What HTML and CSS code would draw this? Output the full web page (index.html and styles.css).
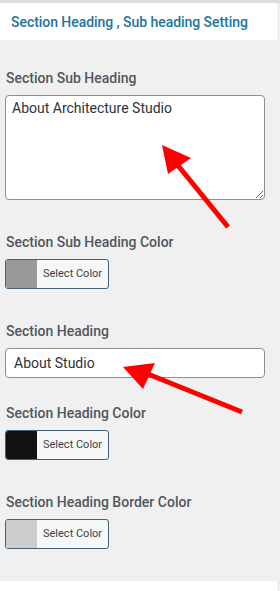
FILE: index.html
```html
<!DOCTYPE html>
<html lang="en">

<head>
    <meta charset="UTF-8">
    <title>Section Heading Setting</title>
    <link rel="stylesheet" href="styles.css">
</head>

<body>

    <div class="panel">
        <!--panel title-->
        <div class="panel_head">
            <p>Section Heading , Sub heading Setting</p>
        </div>

        <div class="panel_body">
            <div class="field">
                <label for="sub_heading">Section Sub Heading</label>
                <textarea id="sub_heading">About Architecture Studio</textarea>
            </div>

            <div class="field">
                <label>Section Sub Heading Color</label>
                <button class="color_btn"><span class="swatch swatch_grey"></span><span class="color_txt">Select Color</span></button>
            </div>

            <div class="field field_short">
                <label for="heading">Section Heading</label>
                <input type="text" id="heading" value="About Studio">
            </div>

            <div class="field">
                <label>Section Heading Color</label>
                <button class="color_btn"><span class="swatch swatch_dark"></span><span class="color_txt">Select Color</span></button>
            </div>

            <div class="field">
                <label>Section Heading Border Color</label>
                <button class="color_btn"><span class="swatch swatch_light"></span><span class="color_txt">Select Color</span></button>
            </div>
        </div>

        <div class="panel_foot"></div>

        <!--red arrows drawn over the screenshot-->
        <svg class="arrows" width="280" height="591" viewBox="0 0 280 591">
            <line x1="228" y1="227" x2="176" y2="163" stroke="#ff0000" stroke-width="5" />
            <polygon points="162,145 168,174 191,158" fill="#ff0000" />
            <line x1="242" y1="412" x2="143" y2="372" stroke="#ff0000" stroke-width="5" />
            <polygon points="123,367 143,389 155,363" fill="#ff0000" />
        </svg>
    </div>

</body>

</html>
```
FILE: styles.css
```css
* {
    margin: 0px;
    padding: 0px;
    box-sizing: border-box;
}

body {
    background-color: #f0f0f0;
    font-family: Roboto, "Liberation Sans", sans-serif;
}

.panel {
    position: relative;
    width: 280px;
    height: 591px;
    border-top: 3px solid #dcdcdc;
    display: flex;
    flex-direction: column;
}

.panel_head {
    height: 37px;
    background-color: white;
    width: 277px;
    padding-left: 11px;
    display: flex;
    align-items: center;
}

.panel_head p {
    color: #21759b;
    font-size: 14px;
    font-weight: 500;
    letter-spacing: -0.05px;
}

.panel_body {
    width: 277px;
    padding: 28px 12px 32px 5px;
    background-color: #f0f0f0;
}

.field {
    display: flex;
    flex-direction: column;
    align-items: flex-start;
    margin-bottom: 32px;
}

.field:last-child {
    margin-bottom: 0px;
}

.field_short {
    margin-bottom: 25px;
}

.field label {
    height: 20px;
    line-height: 20px;
    margin-left: 1px;
    margin-bottom: 7px;
    font-size: 14px;
    font-weight: 500;
    color: #50575e;
}

#sub_heading,
#heading {
    width: 260px;
    border: 1px solid #8c8f94;
    border-radius: 4px;
    background-color: white;
    font-family: Roboto, "Liberation Sans", sans-serif;
    font-size: 14px;
    color: #2c3338;
}

#sub_heading {
    height: 105px;
    padding: 2px 6px;
    line-height: 20px;
    resize: vertical;
}

#heading {
    height: 30px;
    padding: 0px 8px;
}

.color_btn {
    width: 104px;
    height: 30px;
    display: flex;
    border: 1px solid #43607b;
    border-radius: 3px;
    background-color: #f6f7f7;
    overflow: hidden;
    font-family: Roboto, "Liberation Sans", sans-serif;
}

.swatch {
    width: 31px;
    height: 100%;
}

.swatch_grey {
    background-color: #999999;
}

.swatch_dark {
    background-color: #111111;
}

.swatch_light {
    background-color: #cccccc;
}

.color_txt {
    flex: 1;
    height: 100%;
    line-height: 28px;
    padding-left: 6px;
    text-align: left;
    font-size: 11px;
    color: #3c434a;
}

.panel_foot {
    flex: 1;
    width: 277px;
    background-color: white;
}

.arrows {
    position: absolute;
    left: 0px;
    top: -3px;
}
```
